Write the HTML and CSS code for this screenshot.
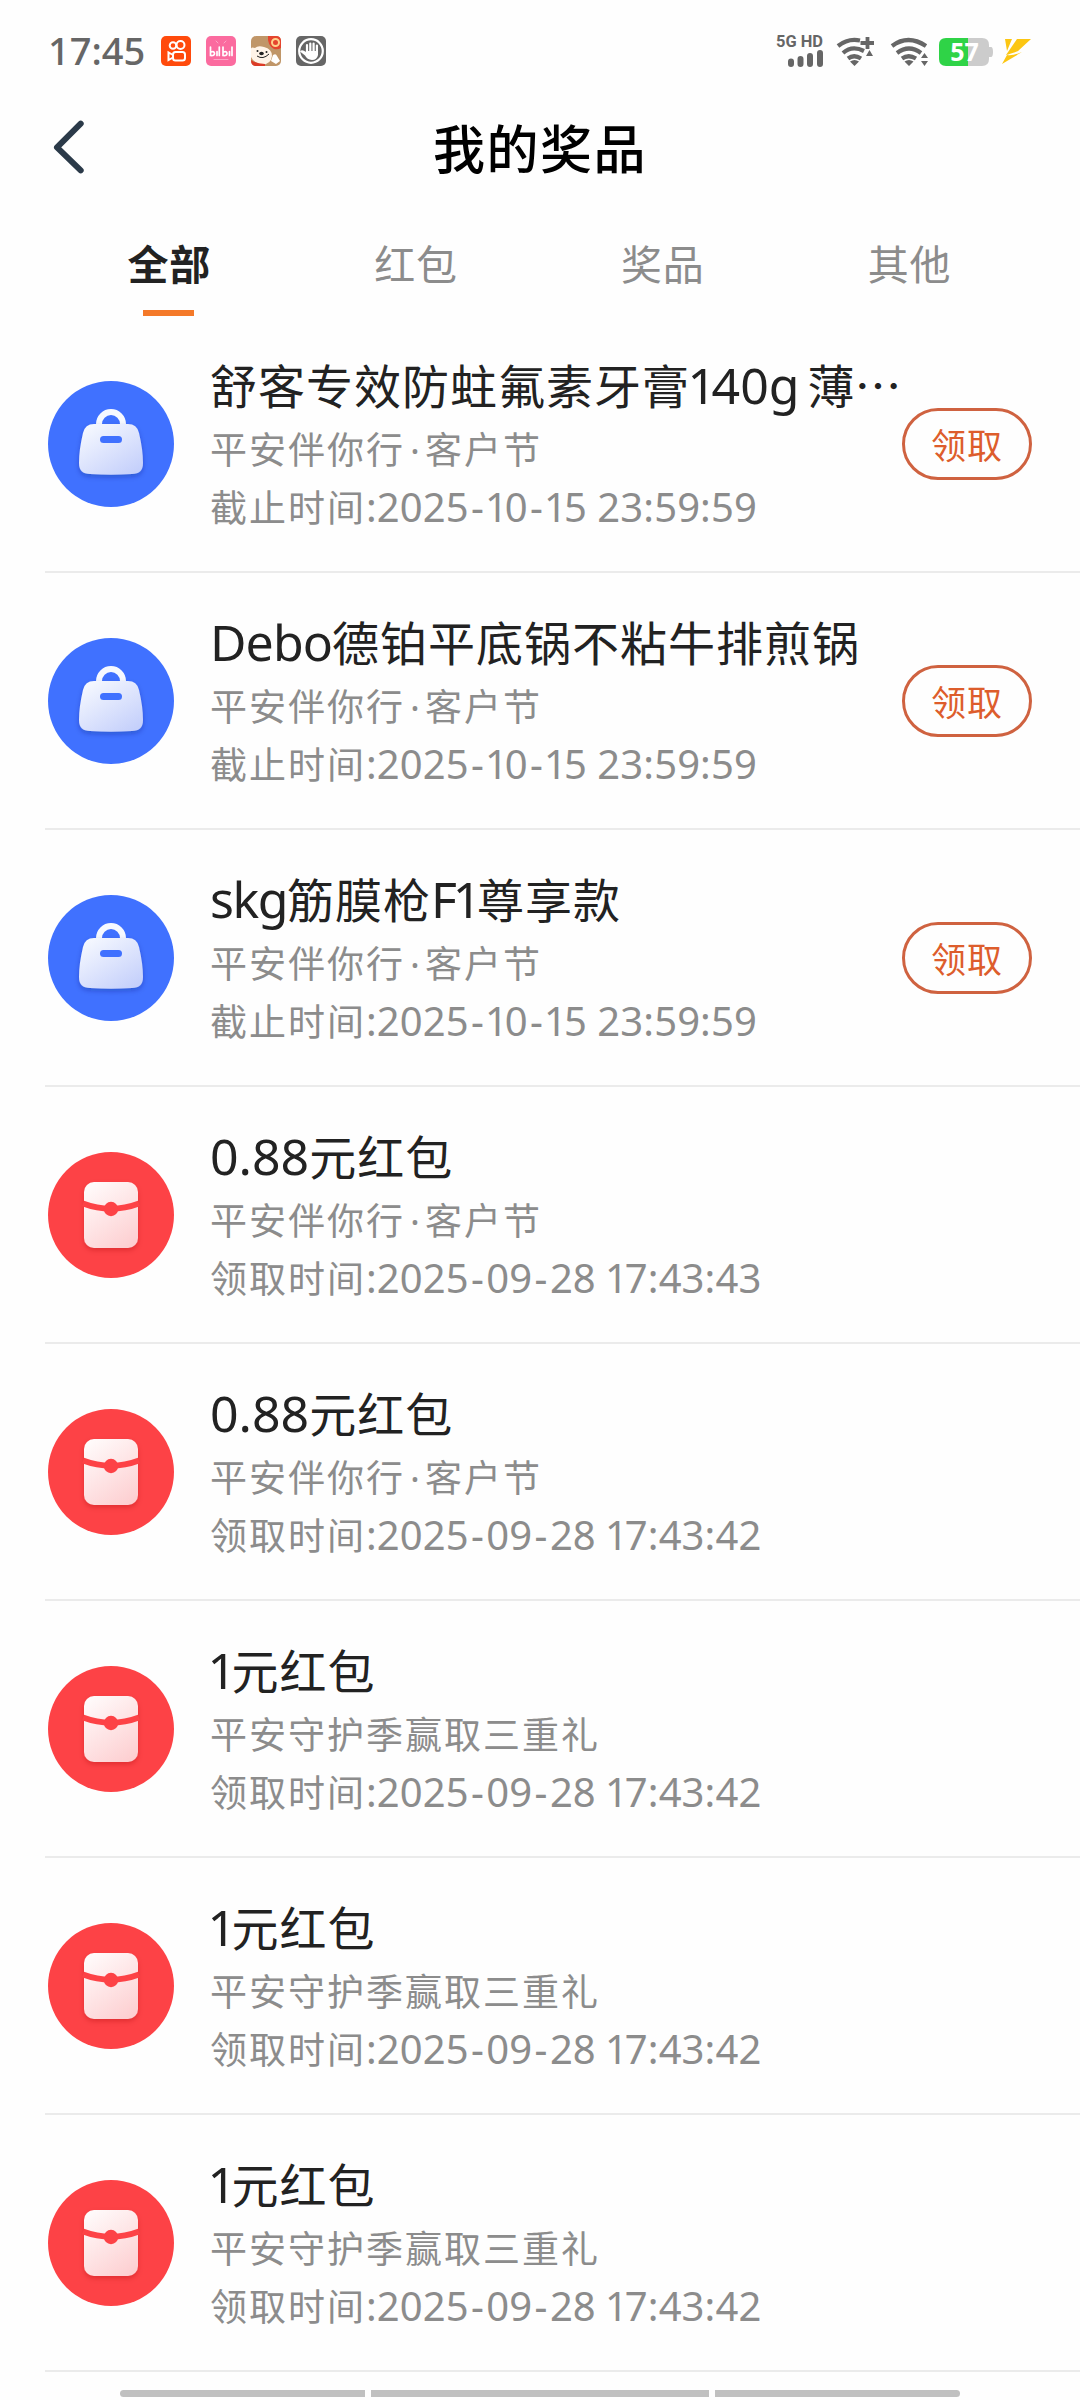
FILE: index.html
```html
<!DOCTYPE html>
<html lang="zh-CN">
<head>
<meta charset="utf-8">
<title>我的奖品</title>
<link rel="stylesheet" href="styles.css">
</head>
<body>
<svg class="defs" width="0" height="0" aria-hidden="true">
  <defs>
    <linearGradient id="bag-fill" x1="0" y1="0" x2="0.8" y2="1"><stop offset="0" stop-color="#fafcff"/><stop offset="1" stop-color="#c5d0fb"/></linearGradient>
    <linearGradient id="env-fill" x1="0.2" y1="0" x2="0.8" y2="1"><stop offset="0" stop-color="#fffafa"/><stop offset="1" stop-color="#fdcfd1"/></linearGradient>
    <filter id="soft" x="-30%" y="-30%" width="160%" height="160%"><feDropShadow dx="0" dy="2.5" stdDeviation="2.5" flood-color="#101a70" flood-opacity="0.3"/></filter>
    <filter id="soft-red" x="-30%" y="-30%" width="160%" height="160%"><feDropShadow dx="0" dy="2.5" stdDeviation="2.5" flood-color="#a00010" flood-opacity="0.3"/></filter>
    <symbol id="bag" viewBox="0 0 126 126">
      <circle cx="63" cy="63" r="63" fill="#4071ff"/>
      <path d="M51 46V43a12 12 0 0 1 24 0v3" fill="none" stroke="#f6f9ff" stroke-width="6"/>
      <path filter="url(#soft)" fill="url(#bag-fill)" d="M46 43H80Q89 43 91 52Q95 69 95 82Q95 93 84 93Q63 94.500 42 93Q31 93 31 82Q31 69 35 52Q37 43 46 43Z"/>
      <rect x="52" y="55" width="22" height="7" rx="3.500" fill="#4071ff"/>
    </symbol>
    <symbol id="envelope" viewBox="0 0 126 126">
      <circle cx="63" cy="63" r="63" fill="#fd4246"/>
      <rect filter="url(#soft-red)" x="36" y="30" width="54" height="66" rx="10" fill="url(#env-fill)"/>
      <path d="M35 51.500Q63 62 91 51.500" fill="none" stroke="#fd4246" stroke-width="6"/>
      <circle cx="63" cy="57" r="7.200" fill="#fd4246"/>
    </symbol>
  </defs>
</svg>
<div class="screen">
  <header class="status">
    <span class="clock">17:45</span>
    <div class="apps">
      <svg class="app" viewBox="0 0 30 30"><rect width="30" height="30" rx="5" fill="#ff4a0c"/><g fill="none" stroke="#fff" stroke-width="2"><circle cx="12" cy="9.500" r="3.300"/><circle cx="19.500" cy="9" r="4"/><rect x="12" y="16" width="12" height="8.500" rx="2.500"/><path d="M12 19 7.500 16.500v7.500L12 21.500"/></g></svg>
      <svg class="app" viewBox="0 0 30 30"><rect width="30" height="30" rx="5" fill="#fb6b9f"/><g fill="none" stroke="#fff" stroke-width="1.700" stroke-linecap="round"><path d="M4.500 11v8.500q4 .5 4-2t-3.500-1.500M11 15.500v4M13.300 11v8.500M17 11v8.500q4 .5 4-2t-3.500-1.500M23.500 15.500v4M26 11v8.500"/><path stroke="#fda6c6" stroke-width="1" d="m10 5 2 2M20 5l-2 2M8 23.500h14"/></g></svg>
      <svg class="app" viewBox="0 0 30 30"><rect width="30" height="30" rx="5" fill="#c09668"/><path fill="#e5452e" d="M17 0h8q5 0 5 5v7q-3 2-7 1-7-4-6-13Z"/><circle cx="24.500" cy="6.500" r="3.500" fill="none" stroke="#ffd28c" stroke-width="2"/><path fill="#fff4e8" d="M0 15Q-1 10 4 12q3-3 9-1 8 2 8 9-1 8-10 9-9-3-11-8Z"/><path fill="#fff" d="m20 25 2-6q3-2 4 1l3 5-4 3Z"/><path fill="#dc3b27" d="M0 24q5 4 14 4v2H5q-5 0-5-6Z"/><g fill="#222"><ellipse cx="10.500" cy="17.500" rx="2.300" ry="1.700"/><circle cx="6.500" cy="15" r="1"/><circle cx="15.500" cy="16" r="1"/></g><path d="M6 20q6 4 12-2" stroke="#222" fill="none"/></svg>
      <svg class="app" viewBox="0 0 30 30"><rect width="30" height="30" rx="5" fill="#666"/><circle cx="15" cy="15" r="11.800" fill="none" stroke="#fff" stroke-width="2.200"/><path d="M11 17V9M14.300 16V7.500M17.600 16V7.500M20.900 17V9.500" stroke="#fff" stroke-width="2.200" stroke-linecap="round"/><path fill="#fff" d="M9.900 15H22v4q-1 5-6 5-5-.5-7-4.500l-5-4q2-2.500 6 .5Z"/></svg>
    </div>
    <div class="signals">
      <svg class="cell" viewBox="0 0 48 36"><text x="0" y="12.500" textLength="47" lengthAdjust="spacingAndGlyphs" class="net">5G HD</text><path d="M15 27.500v2.500M24.500 25v5M34 22v8M44 19v11" stroke="#666" stroke-width="6" stroke-linecap="round"/></svg>
      <svg class="wifi" viewBox="0 0 38 32"><g fill="none" stroke="#666" stroke-width="4.200"><path d="M2 10Q12 2 24 4.500M7 17q9-8 21-2M12 22.500q6-4.500 13 0"/></g><path fill="#666" d="m14 25.500 4.500 4.500 4.500-4.500q-4.500-3-9 0ZM30 20l3.500-6 3.500 6Z"/><path d="M24.500 7H38M31.500 1v12" stroke="#666" stroke-width="3.800"/></svg>
      <svg class="wifi second" viewBox="0 0 38 32"><g fill="none" stroke="#666" stroke-width="4.200"><path d="M2 10q16-12 34 0M7 17q12-9 24 0M12 22.500q6.500-4.500 14 0"/></g><path fill="#666" d="m14.500 25.500 4.500 4.500 4.500-4.500q-4.500-3-9 0ZM31 22l3.500-5 3.500 5ZM31 25h7l-3.500 5Z"/></svg>
      <svg class="battery" viewBox="0 0 54 28"><path fill="#ccc" d="M8 0h35q7 0 7 7v2h2q2 0 2 5t-2 5h-2v2q0 7-7 7H8Z"/><path fill="#2fd347" d="M29 0H7Q0 0 0 7v14q0 7 7 7h22Z"/><text x="25.500" y="23" text-anchor="middle" class="level">57</text></svg>
      <svg class="bolt" viewBox="0 0 30 26"><path fill="#fcc612" d="M3 0h7L5 12ZM15 0h14L16 12Q8 15 4 16ZM5 16q6 1 15-3L0 25Z"/></svg>
    </div>
  </header>
  <nav class="bar">
    <svg class="back" viewBox="0 0 34 58"><path d="M28.700 5.700 5 29.300l23.700 23" fill="none" stroke="#2b3a49" stroke-width="6" stroke-linecap="round" stroke-linejoin="round"/></svg>
    <h1 class="heading">我的奖品</h1>
  </nav>
  <div class="tabs">
    <a class="tab active">全部</a><a class="tab">红包</a><a class="tab">奖品</a><a class="tab">其他</a>
  </div>
  <ul class="list">
    <li class="row"><svg class="icon"><use href="#bag"/></svg><div class="info"><p class="name">舒客专效防蛀氟素牙膏<span class="latin"><span class="one">1</span>40g</span><span class="thin-gap"></span>薄<span class="dots">⋯</span></p><p class="sub">平安伴你行<span class="dot">·</span>客户节</p><p class="sub">截止时间<span class="latin">:2025<span class="dash">-</span><span class="one">1</span>0<span class="dash">-</span><span class="one">1</span>5 23:59:59</span></p></div><button class="claim">领取</button></li>
    <li class="row"><svg class="icon"><use href="#bag"/></svg><div class="info"><p class="name"><span class="latin word">Debo</span>德铂平底锅不粘牛排煎锅</p><p class="sub">平安伴你行<span class="dot">·</span>客户节</p><p class="sub">截止时间<span class="latin">:2025<span class="dash">-</span><span class="one">1</span>0<span class="dash">-</span><span class="one">1</span>5 23:59:59</span></p></div><button class="claim">领取</button></li>
    <li class="row"><svg class="icon"><use href="#bag"/></svg><div class="info"><p class="name"><span class="latin tight">skg</span>筋膜枪<span class="latin tight">F<span class="one">1</span></span>尊享款</p><p class="sub">平安伴你行<span class="dot">·</span>客户节</p><p class="sub">截止时间<span class="latin">:2025<span class="dash">-</span><span class="one">1</span>0<span class="dash">-</span><span class="one">1</span>5 23:59:59</span></p></div><button class="claim">领取</button></li>
    <li class="row"><svg class="icon"><use href="#envelope"/></svg><div class="info"><p class="name"><span class="latin">0.88</span>元红包</p><p class="sub">平安伴你行<span class="dot">·</span>客户节</p><p class="sub">领取时间<span class="latin">:2025<span class="dash">-</span>09<span class="dash">-</span>28 <span class="one">1</span>7:43:43</span></p></div></li>
    <li class="row"><svg class="icon"><use href="#envelope"/></svg><div class="info"><p class="name"><span class="latin">0.88</span>元红包</p><p class="sub">平安伴你行<span class="dot">·</span>客户节</p><p class="sub">领取时间<span class="latin">:2025<span class="dash">-</span>09<span class="dash">-</span>28 <span class="one">1</span>7:43:42</span></p></div></li>
    <li class="row"><svg class="icon"><use href="#envelope"/></svg><div class="info"><p class="name"><span class="latin"><span class="one">1</span></span>元红包</p><p class="sub">平安守护季赢取三重礼</p><p class="sub">领取时间<span class="latin">:2025<span class="dash">-</span>09<span class="dash">-</span>28 <span class="one">1</span>7:43:42</span></p></div></li>
    <li class="row"><svg class="icon"><use href="#envelope"/></svg><div class="info"><p class="name"><span class="latin"><span class="one">1</span></span>元红包</p><p class="sub">平安守护季赢取三重礼</p><p class="sub">领取时间<span class="latin">:2025<span class="dash">-</span>09<span class="dash">-</span>28 <span class="one">1</span>7:43:42</span></p></div></li>
    <li class="row"><svg class="icon"><use href="#envelope"/></svg><div class="info"><p class="name"><span class="latin"><span class="one">1</span></span>元红包</p><p class="sub">平安守护季赢取三重礼</p><p class="sub">领取时间<span class="latin">:2025<span class="dash">-</span>09<span class="dash">-</span>28 <span class="one">1</span>7:43:42</span></p></div></li>
  </ul>
  <footer class="gesture"><i class="pill first"></i><i class="pill mid"></i><i class="pill last"></i></footer>
</div>
</body>
</html>
```

FILE: styles.css
```css
* { box-sizing: border-box; margin: 0; padding: 0; }
body { background: #fefefe; font-family: "Noto Sans CJK SC", sans-serif; }
.defs { position: absolute; }
.screen { width: 1080px; height: 2400px; overflow: hidden; display: flex; flex-direction: column; }
.status { height: 100px; flex: none; display: flex; padding-left: 48px; }
.clock { width: 113px; font: 500 38px/50px "Noto Sans", sans-serif; color: #666; padding-top: 25px; }
.apps { display: flex; gap: 15px; padding-top: 36px; }
.app { width: 30px; height: 30px; display: block; }
.signals { display: flex; margin-left: 450px; padding-top: 34px; }
.signals svg { flex: none; display: block; overflow: visible; }
.cell { width: 48px; height: 36px; }
.net { font: 700 16px "Roboto", sans-serif; fill: #666; }
.wifi { width: 38px; height: 32px; margin: 2px 0 0 12px; }
.wifi.second { margin-left: 16px; }
.battery { width: 54px; height: 28px; margin: 4px 0 0 11px; }
.level { font: 700 25px "Noto Sans", sans-serif; fill: #fff; }
.bolt { width: 30px; height: 26px; margin: 5px 0 0 9px; }
.bar { height: 100px; flex: none; display: grid; grid-template-columns: 88px 1fr 88px; align-items: center; }
.back { width: 34px; height: 58px; margin: -6px 0 0 52px; }
.heading { font-size: 52px; font-weight: 500; line-height: 80px; letter-spacing: 1.5px; color: #000; text-align: center; margin-top: -6px; }
.tabs { height: 116px; flex: none; display: flex; padding: 0 47px 0 46px; }
.tab { flex: 1; display: flex; flex-direction: column; align-items: center; padding-top: 32px; font-size: 41px; line-height: 60px; letter-spacing: 1px; color: #8c8c8c; }
.tab.active { font-weight: 700; color: #222; }
.tab.active::after { content: ""; width: 51px; height: 6px; margin: 18px 1px 0 0; background: #f47929; }
.list { list-style: none; padding-left: 45px; height: 2056px; flex: none; }
.row { height: 257px; display: flex; align-items: center; padding-left: 3px; border-bottom: 2px solid #ebebeb; }
.icon { width: 126px; height: 126px; flex: none; }
.info { flex: 1; min-width: 0; margin: -3px 0 0 36px; white-space: nowrap; }
.name { font-size: 47px; line-height: 70px; letter-spacing: 1px; color: #222; }
.name .latin { font-size: 50px; letter-spacing: 0; }
.name .latin.word { letter-spacing: -0.9px; }
.name .latin.tight { letter-spacing: -1.5px; }
.name .latin .one { letter-spacing: -4.5px; margin-left: -2.5px; }
.sub { font-size: 37px; line-height: 58px; letter-spacing: 2px; color: #8c8c8c; }
.sub .latin { font-size: 40px; letter-spacing: 0.1px; }
.sub .latin .one { letter-spacing: -3px; margin-left: -1.4px; }
.latin { font-family: "Noto Sans", sans-serif; line-height: 1; }
.dash { padding: 0 2.3px; }
.dot { display: inline-block; width: 20px; text-align: center; font-family: "Noto Sans", sans-serif; line-height: 1; letter-spacing: 0; }
.thin-gap { display: inline-block; width: 8px; }
.dots { letter-spacing: 0; margin-left: -1px; }
.claim { width: 130px; height: 72px; flex: none; margin-right: 48px; border: 3px solid #cf6240; border-radius: 36px; background: none; color: #dd5d2c; font: 400 35px/60px "Noto Sans CJK SC", sans-serif; letter-spacing: 1px; }
.gesture { display: flex; gap: 6px; padding: 18px 120px 0; }
.pill { height: 7px; background: #c0c0c0; }
.first { width: 245px; border-radius: 4px 0 0 4px; }
.mid { width: 338px; }
.last { width: 245px; border-radius: 0 4px 4px 0; }
```
